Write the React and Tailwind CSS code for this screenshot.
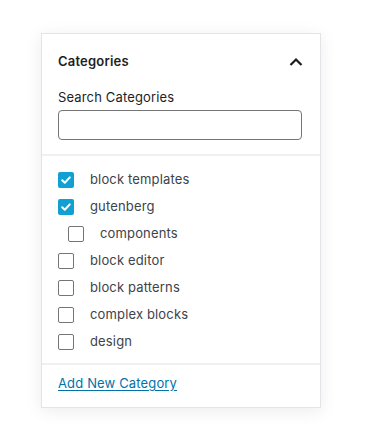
import React from 'react';

const categories = [
    { name: 'block templates', checked: true },
    { name: 'gutenberg', checked: true },
    { name: 'components', checked: false, child: true },
    { name: 'block editor', checked: false },
    { name: 'block patterns', checked: false },
    { name: 'complex blocks', checked: false },
    { name: 'design', checked: false },
];

const Checkbox = ({ checked }) =>
    checked ? (
        <span className="flex h-4 w-4 shrink-0 items-center justify-center rounded-[2px] bg-[#11a0d2]">
            <svg width="12" height="12" viewBox="0 0 12 12" fill="none">
                <path
                    d="M2.2 6.2l2.6 2.5 5-5.3"
                    stroke="#fff"
                    strokeWidth="2"
                    strokeLinecap="round"
                    strokeLinejoin="round"
                />
            </svg>
        </span>
    ) : (
        <span className="block h-4 w-4 shrink-0 rounded-[2px] border-[1.5px] border-[#757575] bg-white" />
    );

const App = () => {
    return (
        <div
            className="min-h-[445px] bg-white pl-[41px] pt-[33px]"
            style={{ fontFamily: 'Inter, "Noto Sans", sans-serif' }}
        >
            <div className="w-[280px] border border-[#e2e4e7] bg-white shadow-[0_3px_16px_rgba(0,0,0,0.08)]">
                <div className="border-b-2 border-[#f0f0f0] pb-[14px] pl-4 pr-[17px] pt-[18px]">
                    <div className="flex h-5 items-center justify-between">
                        <span className="text-[13px] font-semibold tracking-[0.2px] text-[#1e1e1e]">
                            Categories
                        </span>
                        <svg width="14" height="14" viewBox="0 0 14 14" fill="none">
                            <path
                                d="M1.5 10l5.5-5.5 5.5 5.5"
                                stroke="#1e1e1e"
                                strokeWidth="2.2"
                            />
                        </svg>
                    </div>
                    <div className="mt-[15px]">
                        <label className="block text-[13px] leading-5 tracking-[0.15px] text-[#1e1e1e]">
                            Search Categories
                        </label>
                        <input
                            type="text"
                            className="mt-[3px] block h-[30px] w-[244px] rounded-[4px] border border-[#757575] bg-white px-2 text-[13px] outline-none"
                        />
                    </div>
                </div>
                <ul className="border-b-2 border-[#f0f0f0] px-4 pb-2 pt-[10px]">
                    {categories.map((cat) => (
                        <li
                            key={cat.name}
                            className={`flex h-[27px] items-center gap-4 ${cat.child ? 'pl-[10px]' : ''}`}
                        >
                            <Checkbox checked={cat.checked} />
                            <span className="text-[13px] tracking-[0.15px] text-[#3c434a]">{cat.name}</span>
                        </li>
                    ))}
                </ul>
                <div className="px-4 pb-[14px] pt-2">
                    <a
                        href="#"
                        className="block text-[13px] leading-5 tracking-[0.15px] text-[#0073aa] underline underline-offset-2"
                    >
                        Add New Category
                    </a>
                </div>
            </div>
        </div>
    );
};

export default App;
